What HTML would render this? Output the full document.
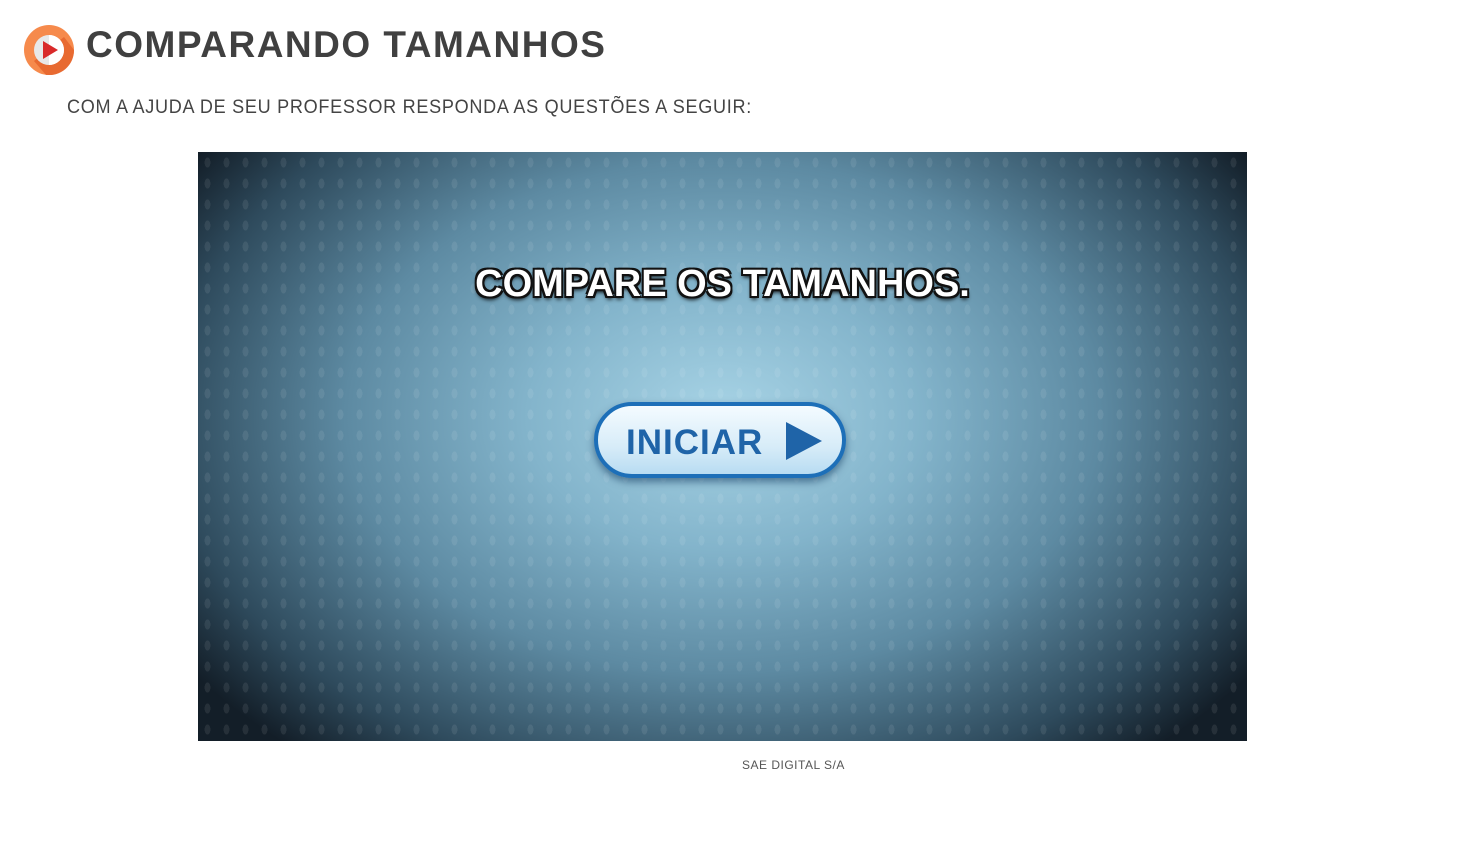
<!DOCTYPE html>
<html><head><meta charset="utf-8"><style>
body{margin:0;width:1460px;height:850px;background:#fff;position:relative;font-family:"Liberation Sans",sans-serif;overflow:hidden}
.h{position:absolute;left:86px;top:24px;font-size:37px;font-weight:bold;color:#404040;letter-spacing:1.5px}
.sub{position:absolute;left:67px;top:97px;font-size:19px;color:#444;letter-spacing:0.75px;transform:scaleX(.95);transform-origin:left}
.stage{position:absolute;left:198px;top:152px;width:1049px;height:589px;
background:radial-gradient(ellipse 62% 75% at 50% 45%,#a8d4e6 0%,#83b4cb 30%,#5d8aa2 58%,#2e4a5c 85%,#131e28 100%)}
.dots{position:absolute;inset:0;background-image:radial-gradient(ellipse 4px 7px,rgba(255,255,255,0.08) 70%,transparent 75%);background-size:19px 21px}
.t{position:absolute;left:0;width:1049px;top:111px;text-align:center;font-size:38px;font-weight:bold;color:#fff;
text-shadow:-2px -2px 0 #111,2px -2px 0 #111,-2px 2px 0 #111,2px 2px 0 #111,0 3px 4px #000}
.btn{position:absolute;left:396px;top:250px;width:252px;height:76px;border-radius:40px;border:4px solid #1d6fb8;box-sizing:border-box;
background:linear-gradient(#f4fbff,#d7ecf8 60%,#b8dcf2);box-shadow:0 4px 8px rgba(0,40,80,.5)}
.btn span{position:absolute;left:28px;top:17px;font-size:35px;font-weight:bold;color:#1f64a8;letter-spacing:1px}
.tri{position:absolute;left:188px;top:16px;width:0;height:0;border-left:36px solid #1f64a8;border-top:19px solid transparent;border-bottom:19px solid transparent}
.f{position:absolute;left:742px;top:758px;font-size:12px;color:#555;letter-spacing:.5px}
</style></head><body>
<svg style="position:absolute;left:24px;top:25px" width="50" height="50" viewBox="0 0 50 50">
<circle cx="25" cy="25" r="25" fill="#f68a4c"/>
<path d="M10 36 L40 12 L50 25 A25 25 0 0 1 22 50 Z" fill="#e5622a" opacity=".8"/>
<circle cx="25" cy="25" r="15" fill="#e8e8e8"/>
<path d="M25 10 A15 15 0 0 1 25 40 Z" fill="#fff"/>
<path d="M19 16 L34 25 L19 34 Z" fill="#d92a2a"/>
</svg>
<div class="h">COMPARANDO TAMANHOS</div>
<div class="sub">COM A AJUDA DE SEU PROFESSOR RESPONDA AS QUESTÕES A SEGUIR:</div>
<div class="stage"><div class="dots"></div>
<div class="t">COMPARE OS TAMANHOS.</div>
<div class="btn"><span>INICIAR</span><div class="tri"></div></div>
</div>
<div class="f">SAE DIGITAL S/A</div>
</body></html>
